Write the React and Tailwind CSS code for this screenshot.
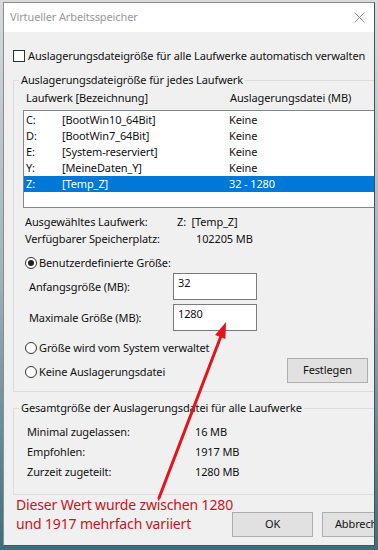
import React from "react";

const drives = [
  { letter: "C:", label: "[BootWin10_64Bit]", size: "Keine" },
  { letter: "D:", label: "[BootWin7_64Bit]", size: "Keine" },
  { letter: "E:", label: "[System-reserviert]", size: "Keine" },
  { letter: "Y:", label: "[MeineDaten_Y]", size: "Keine" },
  { letter: "Z:", label: "[Temp_Z]", size: "32 - 1280", selected: true },
];

const Radio = ({ checked }) => (
  <span className="flex h-[12px] w-[12px] shrink-0 items-center justify-center rounded-full border border-[#333333] bg-white">
    {checked && <span className="h-[6px] w-[6px] rounded-full bg-[#222222]" />}
  </span>
);

const Button = ({ children }) => (
  <div className="flex h-[25px] w-[81px] shrink-0 items-center justify-center border border-[#adadad] bg-[#e1e1e1]">
    {children}
  </div>
);

const App = () => {
  return (
    <div className="relative h-[550px] w-[378px] overflow-hidden bg-linear-to-b from-[#d8dadb] via-[#9fb3ba] to-[#3d6e7b] pl-[3px] pt-[2px] font-['Noto_Sans',sans-serif] text-[11px] tracking-[-0.12px] text-[#111111]">
      <div className="flex h-[544px] w-[372px] flex-col overflow-hidden border border-[#8c8c8c] border-r-[#4a4f52] border-b-[#3b5a63] bg-[#f0f0f0]">
        {/* title bar */}
        <div className="flex h-[29px] shrink-0 items-center justify-between bg-white pl-[6px] pr-[8px]">
          <span className="text-[#999999]">Virtueller Arbeitsspeicher</span>
          <svg width="11" height="11" viewBox="0 0 11 11" className="mr-[1px]">
            <path d="M0.5 0.5 L10.5 10.5 M10.5 0.5 L0.5 10.5" stroke="#8a8a8a" strokeWidth="1" />
          </svg>
        </div>

        <div className="flex flex-col items-start pl-[9px]">
          {/* auto checkbox */}
          <div className="mt-[16px] flex h-[16px] items-center gap-[3px] whitespace-nowrap">
            <span className="h-[12px] w-[12px] shrink-0 border border-[#333333] bg-white" />
            <span>Auslagerungsdateigröße für alle Laufwerke automatisch verwalten</span>
          </div>

          {/* group 1 */}
          <fieldset className="mt-[8px] w-[420px] min-w-0 border border-[#dcdcdc] pb-[8px]">
            <legend className="ml-[5px] px-[2px] leading-[16px]">Auslagerungsdateigröße für jedes Laufwerk</legend>

            <div className="mt-[2px] flex h-[16px] items-center whitespace-nowrap">
              <span className="ml-[12px] w-[204px]">Laufwerk [Bezeichnung]</span>
              <span>Auslagerungsdatei (MB)</span>
            </div>

            <div className="ml-[9px] mt-[4px] h-[98px] w-[400px] border border-[#828790] bg-white pt-[1px]">
              {drives.map((d) => (
                <div
                  key={d.letter}
                  className={`flex h-[16px] items-center whitespace-nowrap pl-[2px] ${d.selected ? "bg-[#0078d7] text-white" : ""}`}
                >
                  <span className="w-[36px]">{d.letter}</span>
                  <span className="w-[167px]">{d.label}</span>
                  <span>{d.size}</span>
                </div>
              ))}
            </div>

            <div className="mt-[6px] flex h-[16px] items-center whitespace-nowrap">
              <span className="ml-[11px] w-[152px]">Ausgewähltes Laufwerk:</span>
              <span>Z:&nbsp;&nbsp;[Temp_Z]</span>
            </div>
            <div className="mt-[1px] flex h-[16px] items-center whitespace-nowrap">
              <span className="ml-[11px] w-[171px]">Verfügbarer Speicherplatz:</span>
              <span>102205 MB</span>
            </div>

            <div className="ml-[11px] mt-[8px] flex h-[16px] items-center gap-[2px] whitespace-nowrap">
              <Radio checked />
              <span>Benutzerdefinierte Größe:</span>
            </div>

            <div className="mt-[2px] flex items-center whitespace-nowrap">
              <span className="ml-[15px] mt-[2px] w-[144px]">Anfangsgröße (MB):</span>
              <div className="h-[27px] w-[84px] border border-[#7a7a7a] bg-white pl-[4px] pt-[1px] leading-[16px]">32</div>
            </div>
            <div className="mt-[4px] flex items-center whitespace-nowrap">
              <span className="ml-[15px] mt-[2px] w-[144px]">Maximale Größe (MB):</span>
              <div className="h-[27px] w-[84px] border border-[#7a7a7a] bg-white pl-[4px] pt-[1px] leading-[16px]">1280</div>
            </div>

            <div className="ml-[11px] mt-[9px] flex h-[16px] items-center gap-[2px] whitespace-nowrap">
              <Radio />
              <span>Größe wird vom System verwaltet</span>
            </div>

            <div className="mt-[2px] flex items-start whitespace-nowrap">
              <div className="ml-[11px] mt-[6px] flex h-[16px] w-[262px] items-center gap-[2px]">
                <Radio />
                <span>Keine Auslagerungsdatei</span>
              </div>
              <Button>Festlegen</Button>
            </div>
          </fieldset>

          {/* group 2 */}
          <fieldset className="mt-[8px] w-[420px] min-w-0 border border-[#dcdcdc] pb-[12px]">
            <legend className="ml-[5px] px-[2px] leading-[16px]">Gesamtgröße der Auslagerungsdatei für alle Laufwerke</legend>
            <div className="mt-[6px] flex flex-col whitespace-nowrap">
              <div className="flex h-[20px] items-center">
                <span className="ml-[13px] w-[168px]">Minimal zugelassen:</span>
                <span>16 MB</span>
              </div>
              <div className="flex h-[20px] items-center">
                <span className="ml-[13px] w-[168px]">Empfohlen:</span>
                <span>1917 MB</span>
              </div>
              <div className="flex h-[20px] items-center">
                <span className="ml-[13px] w-[168px]">Zurzeit zugeteilt:</span>
                <span>1280 MB</span>
              </div>
            </div>
          </fieldset>

          {/* annotation + buttons */}
          <div className="flex items-start whitespace-nowrap">
            <div className="ml-[3px] w-[216px] text-[14px] leading-[19px] tracking-[-0.15px] text-[#c8141c]">
              <div>Dieser Wert wurde zwischen 1280</div>
              <div>und 1917 mehrfach variiert</div>
            </div>
            <div className="mt-[17px] flex gap-[9px]">
              <Button>OK</Button>
              <Button>Abbrechen</Button>
            </div>
          </div>
        </div>
      </div>

      {/* red annotation arrow */}
      <svg className="pointer-events-none absolute left-0 top-0" width="378" height="550" viewBox="0 0 378 550">
        <line x1="159" y1="498" x2="221" y2="336" stroke="#e3141b" strokeWidth="3" strokeLinecap="round" />
        <polygon points="226,322 225.4,338.9 215.1,335" fill="#e3141b" />
      </svg>
    </div>
  );
};

export default App;
